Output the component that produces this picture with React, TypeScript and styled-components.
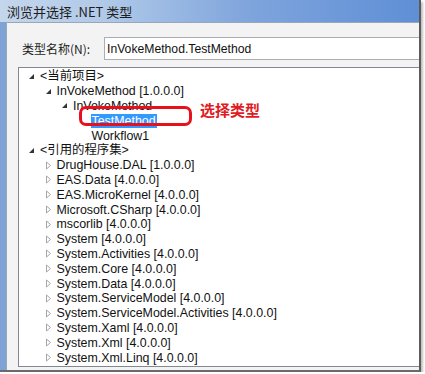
import React from 'react';
import styled, { createGlobalStyle } from 'styled-components';

const Global = createGlobalStyle`
  html, body { margin: 0; padding: 0; background: #ffffff; }
  body { font-family: "Liberation Sans", "Noto Sans CJK SC", sans-serif; }
`;

const Window = styled.div`
  width: 419px;
  height: 370px;
  background: #7fa3d4;
  border-right: 2px solid #5a5a5a;
  border-bottom: 2px solid #6a6a6a;
  box-shadow: 2px 2px 2px rgba(0, 0, 0, 0.25);
  display: flex;
  flex-direction: column;
  overflow: hidden;
`;

const TitleBar = styled.div`
  height: 22px;
  flex: none;
  display: flex;
  align-items: center;
  padding-left: 7px;
  font-size: 13px;
  font-family: "Noto Sans CJK SC", sans-serif;
  color: #1e1e1e;
  background: linear-gradient(90deg, #c4d6ec 0%, #b0c9e8 25%, #7ea4dc 60%, #5f8fd6 100%);
`;

const Client = styled.div`
  flex: 1;
  margin-left: 6px;
  background: #f3f3f3;
  border-left: 1px solid #9aa7b8;
  border-top: 1px solid #9aa7b8;
  padding: 14px 0 0 11px;
  display: flex;
  flex-direction: column;
  gap: 7px;
  min-height: 0;
`;

const NameRow = styled.div`
  display: flex;
  align-items: center;
  height: 23px;
`;

const Label = styled.label`
  width: 82px;
  padding-left: 4px;
  font-size: 12px;
  font-family: "Noto Sans CJK SC", sans-serif;
  color: #1e1e1e;
`;

const NameInput = styled.div`
  flex: 1;
  height: 21px;
  border: 1px solid #abadb3;
  border-right: none;
  background: #fff;
  display: flex;
  align-items: center;
  padding-left: 2px;
  font-size: 12.2px;
  color: #111;
`;

const Tree = styled.div`
  flex: 1;
  background: #fff;
  border: 1px solid #828790;
  border-right: none;
  margin-bottom: 3px;
  padding: 1px 0 0 0;
  position: relative;
`;

const Row = styled.div<{ level: number }>`
  display: flex;
  align-items: center;
  height: 14.8px;
  padding-left: ${(p) => 9 + p.level * 16.5 + (p.level === 3 ? 2 : 0)}px;
  font-size: 12.4px;
  line-height: 14px;
  color: #111;
  white-space: nowrap;
`;

const Arrow = styled.span`
  width: 11px;
  flex: none;
  display: flex;
  align-items: center;
`;

const Text = styled.span<{ selected?: boolean }>`
  display: inline-block;
  height: 14px;
  line-height: 14px;
  padding: 0 1px;
  ${(p) => (p.selected ? 'background: #3399ff; color: #fff;' : '')}
`;

const Callout = styled.div`
  position: absolute;
  left: 60px;
  top: 38px;
  width: 107px;
  height: 14px;
  border: 3px solid #e8101a;
  border-radius: 7px;
`;

const CalloutText = styled.span`
  position: absolute;
  left: 181px;
  top: 33px;
  color: #e01b24;
  font-size: 15px;
  line-height: 18px;
  font-weight: bold;
  font-family: "Noto Sans CJK SC", sans-serif;
`;

const Expanded = () => (
  <svg width="7" height="7" viewBox="0 0 7 7">
    <path d="M6 1 L6 6 L1 6 Z" fill="#333" />
  </svg>
);

const Collapsed = () => (
  <svg width="7" height="9" viewBox="0 0 7 9">
    <path d="M1.5 1 L5.5 4.5 L1.5 8 Z" fill="#fff" stroke="#a6a6a6" strokeWidth="1" />
  </svg>
);

type Node = { level: number; text: string; state?: 'open' | 'closed'; selected?: boolean };

const nodes: Node[] = [
  { level: 0, text: '<当前项目>', state: 'open' },
  { level: 1, text: 'InVokeMethod [1.0.0.0]', state: 'open' },
  { level: 2, text: 'InVokeMethod', state: 'open' },
  { level: 3, text: 'TestMethod', selected: true },
  { level: 3, text: 'Workflow1' },
  { level: 0, text: '<引用的程序集>', state: 'open' },
  ...[
    'DrugHouse.DAL [1.0.0.0]',
    'EAS.Data [4.0.0.0]',
    'EAS.MicroKernel [4.0.0.0]',
    'Microsoft.CSharp [4.0.0.0]',
    'mscorlib [4.0.0.0]',
    'System [4.0.0.0]',
    'System.Activities [4.0.0.0]',
    'System.Core [4.0.0.0]',
    'System.Data [4.0.0.0]',
    'System.ServiceModel [4.0.0.0]',
    'System.ServiceModel.Activities [4.0.0.0]',
    'System.Xaml [4.0.0.0]',
    'System.Xml [4.0.0.0]',
    'System.Xml.Linq [4.0.0.0]',
  ].map((text) => ({ level: 1, text, state: 'closed' as const })),
];

export default function App() {
  return (
    <>
      <Global />
      <Window>
        <TitleBar>浏览并选择 .NET 类型</TitleBar>
        <Client>
          <NameRow>
            <Label>类型名称(N):</Label>
            <NameInput>InVokeMethod.TestMethod</NameInput>
          </NameRow>
          <Tree>
            {nodes.map((n, i) => (
              <Row key={i} level={n.level}>
                <Arrow>
                  {n.state === 'open' && <Expanded />}
                  {n.state === 'closed' && <Collapsed />}
                </Arrow>
                <Text selected={n.selected}>{n.text}</Text>
              </Row>
            ))}
            <Callout />
            <CalloutText>选择类型</CalloutText>
          </Tree>
        </Client>
      </Window>
    </>
  );
}
